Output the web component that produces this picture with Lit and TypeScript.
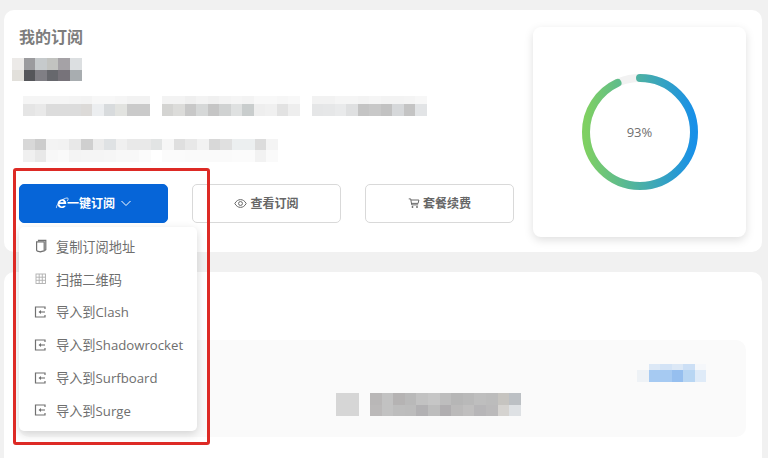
import { LitElement, html, css, svg } from "lit";
import { customElement } from "lit/decorators.js";

type Row = string[];
const mosaic = (rows: Row[], cls = "") => html`<div class="mosaic ${cls}">
  ${rows.map((r) => html`<div class="mrow">${r.map((c) => html`<i style="background:#${c}"></i>`)}</div>`)}
</div>`;

const ICON_IMPORT = svg`<path d="M12 5V3H2.500v10H12v-2" fill="none" stroke="currentColor" stroke-width="1.200"/><path d="M8 8h4" fill="none" stroke="currentColor" stroke-width="1.100"/><path d="M8 6 5.500 8 8 10Z" fill="currentColor"/>`;
const ICON_COPY = svg`<path d="M5.500 3.200V2.300h7.300v9.400l-1.200.8" fill="none" stroke="currentColor" stroke-width="1.200"/><path d="M3.600 3.800h7.600v9c-1.800.3-3.300.8-3.900 1.100L4.500 13.100c-.6-.3-.9-.7-.9-1.200Z" fill="none" stroke="currentColor" stroke-width="1.200"/>`;
const ICON_QR = svg`<g opacity=".55" fill="none" stroke="currentColor" stroke-width=".9"><rect x="3" y="3" width="9.500" height="9.500"/><path d="M6.200 3v9.500M9.300 3v9.500M3 6.200h9.500M3 9.300h9.500"/></g>`;

const menu: { icon: unknown; label: string }[] = [
  { icon: ICON_COPY, label: "复制订阅地址" },
  { icon: ICON_QR, label: "扫描二维码" },
  { icon: ICON_IMPORT, label: "导入到Clash" },
  { icon: ICON_IMPORT, label: "导入到Shadowrocket" },
  { icon: ICON_IMPORT, label: "导入到Surfboard" },
  { icon: ICON_IMPORT, label: "导入到Surge" },
];

@customElement("app-root")
export class AppRoot extends LitElement {
  static styles = css`
    :host {
      display: block;
      position: relative;
      width: 768px;
      height: 458px;
      overflow: hidden;
      box-sizing: border-box;
      padding: 10px 6px 0 4px;
      background: #f1f1f1;
      font-family: "Open Sans", "Noto Sans CJK SC", sans-serif;
      color: #6f6f6f;
    }
    .card { background: #fff; border-radius: 10px; }
    .top { position: relative; z-index: 2; display: flex; height: 242px; justify-content: space-between; padding: 17px 16px 0 15px; box-sizing: border-box; background: #fff; }
    .info { display: flex; flex-direction: column; width: 500px; }
    h1 { margin: 0; font-size: 16px; line-height: 21px; font-weight: 700; color: #7d7d7d; }
    .mosaic { display: flex; flex-direction: column; }
    .mrow { display: flex; height: 11.5px; }
    .mrow i { display: block; width: 11.6px; flex: none; }
    .name { margin: 10px 0 0 -7px; }
    .line { display: flex; gap: 12px; margin: 15px 0 0 4px; }
    .line .mrow:first-child { height: 8px; }
    .line .mrow i { width: 11.5px; }
    .line3 { margin: 23px 0 0 4px; }
    .buttons { display: flex; gap: 24px; margin-top: 22px; }
    .wrap { position: relative; }
    .btn {
      display: flex; align-items: center; justify-content: center; gap: 3px;
      width: 149px; height: 39px; box-sizing: border-box;
      border: 1px solid #d9d9d9; border-radius: 5px; background: #fff;
      font-size: 12px; font-weight: 600; color: #666;
    }
    .btn.primary { background: #0665d8; border-color: #0665d8; color: #fff; font-weight: 700; gap: 0; }
    .btn svg { flex: none; }
    .ie { width: 14px; height: 14px; margin-right: -2px; }
    .chev { width: 12px; height: 12px; margin-left: 5px; }
    .menu {
      position: absolute; left: 0; top: 43px; width: 178px;
      padding: 3.500px 0 4px; background: #fff; border-radius: 5px;
      box-shadow: 0 3px 10px rgba(0, 0, 0, 0.16);
    }
    .item { display: flex; align-items: center; height: 32.800px; padding-left: 14px; font-size: 13.200px; color: #6e6e6e; white-space: nowrap; }
    .item svg { width: 16px; height: 16px; margin-right: 7px; color: #707070; flex: none; }
    .chart {
      width: 213px; height: 210px; align-self: flex-start; box-sizing: border-box;
      display: grid; place-items: center; background: #fff; border-radius: 8px;
      box-shadow: 0 3px 10px rgba(0, 0, 0, 0.13);
    }
    .ring { position: relative; width: 120px; height: 120px; margin-top: -1px; display: grid; place-items: center; font-size: 13px; color: #6f6f6f; }
    .ring svg { position: absolute; inset: 0; }
    .bottom { height: 200px; margin-top: 20px; padding: 68px 16px 0 15px; box-sizing: border-box; }
    .panel { position: relative; height: 97px; background: #fafafa; border-radius: 10px; }
    .blue { position: absolute; left: 618px; top: 24px; }
    .blue .mrow:first-child { height: 6px; }
    .blue .mrow { height: 12px; }
    .blue .mrow i { width: 11.500px; }
    .keys { position: absolute; left: 317px; top: 53px; display: flex; gap: 11px; }
    .keybox { width: 23px; height: 23px; background: #d6d6d6; }
    .mark {
      position: absolute; z-index: 3; left: 13px; top: 168px; width: 197px; height: 277px; box-sizing: border-box;
      border: 3px solid #dd2a25; border-radius: 3px; pointer-events: none;
    }
  `;

  render() {
    const c = 2 * Math.PI * 54;
    return html`
      <section class="card top">
        <div class="info">
          <h1>我的订阅</h1>
          <div class="name">
            ${mosaic([
              ["eceae8", "9b9b9e", "c6cacc", "c2c3c0", "a5a2a6", "dcdfe1"],
              ["e2e0db", "55565a", "807f85", "67686d", "77737a", "a8adb0"],
            ])}
          </div>
          <div class="line">
            ${mosaic([
              ["f5f5f5", "f5f5f5", "f5f5f5", "f5f5f5", "f4f4f4", "f3f3f3", "f7f7f7", "f7f7f7", "f5f5f5", "f2f2f2", "f2f2f2"],
              ["e5e5e5", "e9e9e9", "dcdcdc", "dcdcdc", "dcdcdc", "dcdad8", "eceef0", "d8dbdd", "e2e3e0", "cacaca", "cacaca"],
            ])}
            ${mosaic([
              ["f3f3f3", "f3f3f3", "efefef", "f3f3f3", "f0f0f0", "f3f3f3", "f5f5f5", "f3f3f3", "f8f8f8", "f8f8f8", "f6f6f6", "f8f8f8"],
              ["d4d4d2", "dcdcda", "c8c8c8", "d6d8d8", "c5c5c5", "d0d2d2", "dfe1e1", "c9cdcd", "eeeeee", "f0f0f0", "e2e2e2", "eeeeee"],
            ])}
            ${mosaic([
              ["f2f2f2", "f2f2f2", "f5f5f5", "f5f5f5", "f3f3f3", "f5f5f5", "f3f3f3", "f3f3f3", "f4f4f4", "f7f7f7"],
              ["e5e6e7", "e6e7e8", "e9eaeb", "dfe0e1", "c4c4c4", "c8c8c8", "c2c2c2", "d6d8da", "c4c4c4", "e2e4e6"],
            ])}
          </div>
          <div class="line3">
            ${mosaic([
              ["d8d8d8", "cccccc", "f3f3f3", "f2f2f2", "e8e8e8", "cfcfcf", "ebebeb", "dfe2e4", "f0f0f0", "e9e9e9", "e9e9e9", "e2e4e4", "f6f6f6", "dfdfdf", "e8e8e8", "f2f2f2", "d8d8d8", "e0e0e0", "eceff0", "eceff0", "dcdcdc", "f4f4f4"],
              ["f0f0f0", "e8e8e8", "f8f8f8", "fafafa", "f4f4f4", "f5f5f5", "f5f5f5", "f6f6f6", "f8f8f8", "f8f8f8", "fbfbfb", "ffffff", "fbfbfb", "fbfbfb", "fafafa", "fafafa", "fafafa", "fafafa", "fbfbfb", "fbfbfb", "f2f2f2", "fafafa"],
            ])}
          </div>
          <div class="buttons">
            <div class="wrap">
              <div class="btn primary">
                <svg class="ie" viewBox="0 0 16 16"><path d="M3.200 9.200h9.600c.3-3-1.600-5.400-4.500-5.400C5 3.800 3 6.300 3 9c0 2.800 2 4.700 4.800 4.700 2.100 0 3.800-1 4.500-2.700H9.700c-.5.600-1.100.9-1.900.9-1.400 0-2.200-.9-2.300-2.100Zm2.400-2c.2-1.100 1.100-1.800 2.300-1.800s2 .7 2.100 1.800Z" fill="currentColor"/><path d="M1.800 13.800C1 12.500 3.500 7.500 8 4.600c3-1.900 6-2.900 6.800-2 .5.500.1 1.800-.9 3.300" fill="none" stroke="currentColor" stroke-width=".9"/></svg>
                一键订阅
                <svg class="chev" viewBox="0 0 12 12"><path d="M1.500 4 6 8.500 10.500 4" fill="none" stroke="currentColor" stroke-width="1"/></svg>
              </div>
              <div class="menu">
                ${menu.map((m) => html`<div class="item"><svg viewBox="0 0 16 16">${m.icon}</svg>${m.label}</div>`)}
              </div>
            </div>
            <div class="btn">
              <svg width="13" height="13" viewBox="0 0 16 16"><path d="M1 8c1.800-3.200 4.200-4.800 7-4.800s5.200 1.600 7 4.800c-1.800 3.200-4.200 4.800-7 4.800S2.800 11.200 1 8Z" fill="none" stroke="currentColor" stroke-width="1.200"/><circle cx="8" cy="8" r="2.400" fill="none" stroke="currentColor" stroke-width="1.200"/></svg>
              查看订阅
            </div>
            <div class="btn">
              <svg width="12" height="12" viewBox="0 0 16 16"><path d="M1 2.500h2.500l1.500 8h8.500M4 4h10.500l-1 4.500H4.800" fill="none" stroke="currentColor" stroke-width="1.300"/><circle cx="6" cy="13.300" r="1.200" fill="currentColor"/><circle cx="12" cy="13.300" r="1.200" fill="currentColor"/></svg>
              套餐续费
            </div>
          </div>
        </div>
        <div class="chart">
          <div class="ring">
            <svg viewBox="0 0 120 120" width="120" height="120">
              <defs>
                <linearGradient id="rg" x1="0" y1="0" x2="0" y2="1">
                  <stop offset="0" stop-color="#7fd062"></stop>
                  <stop offset="1" stop-color="#1890e8"></stop>
                </linearGradient>
              </defs>
              <circle cx="60" cy="60" r="54" fill="none" stroke="#f2f2f2" stroke-width="8"></circle>
              <circle cx="60" cy="60" r="54" fill="none" stroke="url(#rg)" stroke-width="8" stroke-linecap="round"
                stroke-dasharray="${c * 0.93} ${c}"
                transform="rotate(-90 60 60)"></circle>
            </svg>
            93%
          </div>
        </div>
      </section>
      <section class="card bottom">
        <div class="panel">
          <div class="blue">
            ${mosaic([
              ["fafafa", "dce8f6", "d3e3f6", "dce8f6", "ccdff5", "f5f7fa"],
              ["eef2f6", "a6caf2", "a6caf2", "96bfef", "b8d6f3", "dfebf8"],
            ])}
          </div>
          <div class="keys">
            <div class="keybox"></div>
            ${mosaic([
              ["b9b7b7", "c2c2c2", "b5b3b3", "b9b9b9", "c2c2c2", "c6c6c6", "bdbdbd", "b6b6b6", "b9b9b9", "bebebe", "bcbcbc", "c6c4c0", "bcc0c4"],
              ["bbb9b9", "c2c2c2", "bdbdbd", "bcbcbc", "b2b1b3", "bdbdbd", "b0aeb0", "bbbaba", "c0bfbf", "b7b6b8", "bbbabb", "d5d3d0", "dee1e4"],
            ])}
          </div>
        </div>
      </section>
      <div class="mark"></div>
    `;
  }
}
